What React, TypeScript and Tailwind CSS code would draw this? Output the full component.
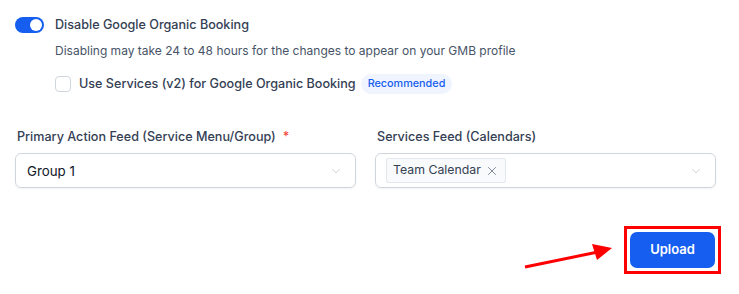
import { ChevronDown, X } from "lucide-react";

export default function App() {
  return (
    <div className="w-[739px] h-[294px] bg-white font-['Inter',sans-serif] text-[#344054] overflow-hidden">
      <div className="pl-[15px] pr-[23px] pt-[17px]">
        {/* Toggle */}
        <div className="flex items-center gap-[11px]">
          <div className="w-[29px] h-[16px] rounded-full bg-[#155eef] flex items-center justify-end pr-[2px]">
            <div className="w-[12px] h-[12px] rounded-full bg-white" />
          </div>
          <span className="text-[12.6px] font-medium leading-[16px]">Disable Google Organic Booking</span>
        </div>
        <p className="ml-[40px] mt-[10px] text-[12px] leading-[16px] text-[#475467]">
          Disabling may take 24 to 48 hours for the changes to appear on your GMB profile
        </p>

        {/* Checkbox */}
        <div className="ml-[40px] mt-[15px] flex items-center">
          <div className="w-[16px] h-[16px] rounded-[4px] border border-[#d0d5dd] bg-white" />
          <span className="ml-[8px] text-[12.6px] font-medium leading-[16px]">
            Use Services (v2) for Google Organic Booking
          </span>
          <span className="ml-[5px] rounded-full bg-[#eff4ff] px-[7px] py-[3px] text-[10.8px] font-medium leading-[14px] text-[#155eef]">
            Recommended
          </span>
        </div>

        {/* Selects */}
        <div className="mt-[35px] grid grid-cols-2 gap-[19px]">
          <div>
            <label className="block pl-[2px] text-[12.6px] font-medium leading-[16px]">
              Primary Action Feed (Service Menu/Group)
              <span className="ml-[7px] text-[#f04438]">*</span>
            </label>
            <div className="mt-[8px] h-[35px] rounded-[6px] border border-[#d0d5dd] shadow-[0_1px_2px_rgba(16,24,40,0.05)] flex items-center justify-between pl-[11px] pr-[12px]">
              <span className="text-[13.3px] leading-[18px] text-[#101828]">Group 1</span>
              <ChevronDown className="w-[14px] h-[14px] text-[#c4c9d2]" strokeWidth={1.5} />
            </div>
          </div>
          <div>
            <label className="block pl-[2px] text-[12.6px] font-medium leading-[16px]">
              Services Feed (Calendars)
            </label>
            <div className="mt-[8px] h-[35px] rounded-[6px] border border-[#d0d5dd] shadow-[0_1px_2px_rgba(16,24,40,0.05)] flex items-center justify-between pl-[10px] pr-[12px]">
              <span className="flex items-center h-[25px] rounded-[2px] border border-[#e4e7ec] bg-[#f9fafb] pl-[6px] pr-[6px] text-[12.3px] text-[#344054]">
                Team Calendar
                <X className="ml-[4px] w-[14px] h-[14px] text-[#667085]" strokeWidth={1.4} />
              </span>
              <ChevronDown className="w-[14px] h-[14px] text-[#c4c9d2]" strokeWidth={1.5} />
            </div>
          </div>
        </div>

        {/* Upload */}
        <div className="mt-[38px] flex items-end justify-end">
          <svg width="90" height="26" viewBox="0 0 90 26" className="mb-[4px] mr-[10px]">
            <line x1="1" y1="23" x2="74" y2="8" stroke="#ff0000" strokeWidth="3" />
            <polygon points="88,4 68,0 73,16" fill="#ff0000" />
          </svg>
          <div className="-mr-[5px] border-[3px] border-[#ff0000] p-[3px]">
            <button className="w-[85px] h-[36px] rounded-[7px] bg-[#155eef] text-white text-[13px] font-semibold">
              Upload
            </button>
          </div>
        </div>
      </div>
    </div>
  );
}
